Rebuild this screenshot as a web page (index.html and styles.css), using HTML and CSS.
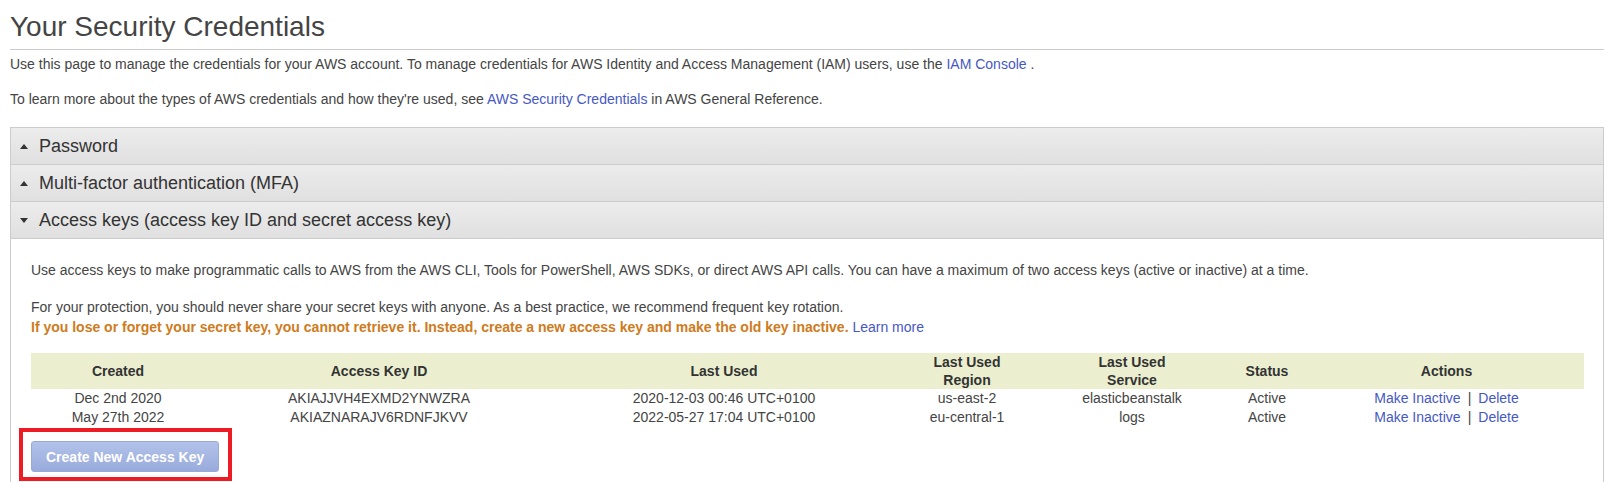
FILE: index.html
```html
<!DOCTYPE html>
<html lang="en">
<head>
<meta charset="utf-8">
<title>Your Security Credentials</title>
<link rel="stylesheet" href="styles.css">
</head>
<body>
<h1 class="title">Your Security Credentials</h1>
<p class="intro">Use this page to manage the credentials for your AWS account. To manage credentials for AWS Identity and Access Management (IAM) users, use the <a class="link" href="#">IAM Console</a> .</p>
<p class="intro intro-last">To learn more about the types of AWS credentials and how they're used, see <a class="link" href="#">AWS Security Credentials</a> in AWS General Reference.</p>

<div class="panel">
  <div class="section-head">
    <svg class="caret" width="8" height="5" viewBox="0 0 8 5"><polygon points="0,5 8,5 4,0" fill="#333"/></svg>
    <span>Password</span>
  </div>
  <div class="section-head">
    <svg class="caret" width="8" height="5" viewBox="0 0 8 5"><polygon points="0,5 8,5 4,0" fill="#333"/></svg>
    <span>Multi-factor authentication (MFA)</span>
  </div>
  <div class="section-head">
    <svg class="caret" width="8" height="5" viewBox="0 0 8 5"><polygon points="0,0 8,0 4,5" fill="#333"/></svg>
    <span>Access keys (access key ID and secret access key)</span>
  </div>
  <div class="section-body">
    <p class="body-text">Use access keys to make programmatic calls to AWS from the AWS CLI, Tools for PowerShell, AWS SDKs, or direct AWS API calls. You can have a maximum of two access keys (active or inactive) at a time.</p>
    <p class="body-text body-text-last">For your protection, you should never share your secret keys with anyone. As a best practice, we recommend frequent key rotation.<br><strong class="warning">If you lose or forget your secret key, you cannot retrieve it. Instead, create a new access key and make the old key inactive.</strong> <a class="link" href="#">Learn more</a></p>

    <table class="keys">
      <colgroup>
        <col class="c-created">
        <col class="c-id">
        <col class="c-used">
        <col class="c-region">
        <col class="c-service">
        <col class="c-status">
        <col class="c-actions">
      </colgroup>
      <thead>
        <tr>
          <th>Created</th>
          <th>Access Key ID</th>
          <th>Last Used</th>
          <th>Last Used<br>Region</th>
          <th>Last Used<br>Service</th>
          <th>Status</th>
          <th>Actions</th>
        </tr>
      </thead>
      <tbody>
        <tr>
          <td>Dec 2nd 2020</td>
          <td>AKIAJJVH4EXMD2YNWZRA</td>
          <td>2020-12-03 00:46 UTC+0100</td>
          <td>us-east-2</td>
          <td>elasticbeanstalk</td>
          <td>Active</td>
          <td><a class="link" href="#">Make Inactive</a><span class="sep">|</span><a class="link" href="#">Delete</a></td>
        </tr>
        <tr>
          <td>May 27th 2022</td>
          <td>AKIAZNARAJV6RDNFJKVV</td>
          <td>2022-05-27 17:04 UTC+0100</td>
          <td>eu-central-1</td>
          <td>logs</td>
          <td>Active</td>
          <td><a class="link" href="#">Make Inactive</a><span class="sep">|</span><a class="link" href="#">Delete</a></td>
        </tr>
      </tbody>
    </table>

    <div class="highlight">
      <button class="create-btn" type="button">Create New Access Key</button>
    </div>
  </div>
</div>
</body>
</html>
```

FILE: styles.css
```css
html, body {
  background: #ffffff;
}

body {
  margin: 0;
  padding: 0 8px 0 10px;
  font-family: "Liberation Sans", Arial, sans-serif;
  font-size: 14px;
  color: #444444;
}

.title {
  margin: 11px 0 0;
  padding: 0 0 6px;
  font-size: 28px;
  line-height: 32px;
  font-weight: normal;
  color: #444444;
  border-bottom: 1px solid #cccccc;
}

.intro {
  margin: 4px 0 15px;
  line-height: 20px;
}

.intro-last {
  margin-bottom: 18px;
}

.link {
  color: #4658c4;
  text-decoration: none;
}

.panel {
  border: 1px solid #cccccc;
  border-bottom: none;
}

.section-head {
  display: flex;
  align-items: center;
  height: 36px;
  padding-left: 9px;
  background: linear-gradient(#ececec, #e0e0e0);
  border-bottom: 1px solid #cccccc;
  font-size: 18px;
  color: #333333;
}

.caret {
  display: block;
  margin-right: 11px;
  flex: none;
}

.section-body {
  padding: 21px 19px 20px 20px;
}

.body-text {
  margin: 0 0 17px;
  line-height: 20px;
}

.body-text-last {
  margin-bottom: 16px;
}

.warning {
  color: #cf7b20;
  font-weight: bold;
}

.keys {
  width: 100%;
  border-collapse: collapse;
  table-layout: fixed;
}

.c-created { width: 174px; }
.c-id { width: 348px; }
.c-used { width: 342px; }
.c-region { width: 144px; }
.c-service { width: 186px; }
.c-status { width: 84px; }
.c-actions { width: 275px; }

.keys th {
  height: 36px;
  padding: 0;
  background: #ebefcf;
  font-weight: bold;
  line-height: 18px;
  color: #333333;
  text-align: center;
  vertical-align: middle;
}

.keys td {
  padding: 0;
  line-height: 19px;
  text-align: center;
  color: #444444;
}

.sep {
  color: #444444;
  margin: 0 7px;
}

.highlight {
  display: inline-block;
  margin: 1px 0 0 -12px;
  padding: 9px 9px 5px 8px;
  border: 4px solid #ed1c24;
}

.create-btn {
  display: block;
  height: 31px;
  padding: 0 14px;
  border: 1px solid #9aaad8;
  border-radius: 3px;
  background: linear-gradient(#b2c2ea, #99abdb);
  font-family: "Liberation Sans", Arial, sans-serif;
  font-size: 14px;
  font-weight: bold;
  color: #ffffff;
}
```
